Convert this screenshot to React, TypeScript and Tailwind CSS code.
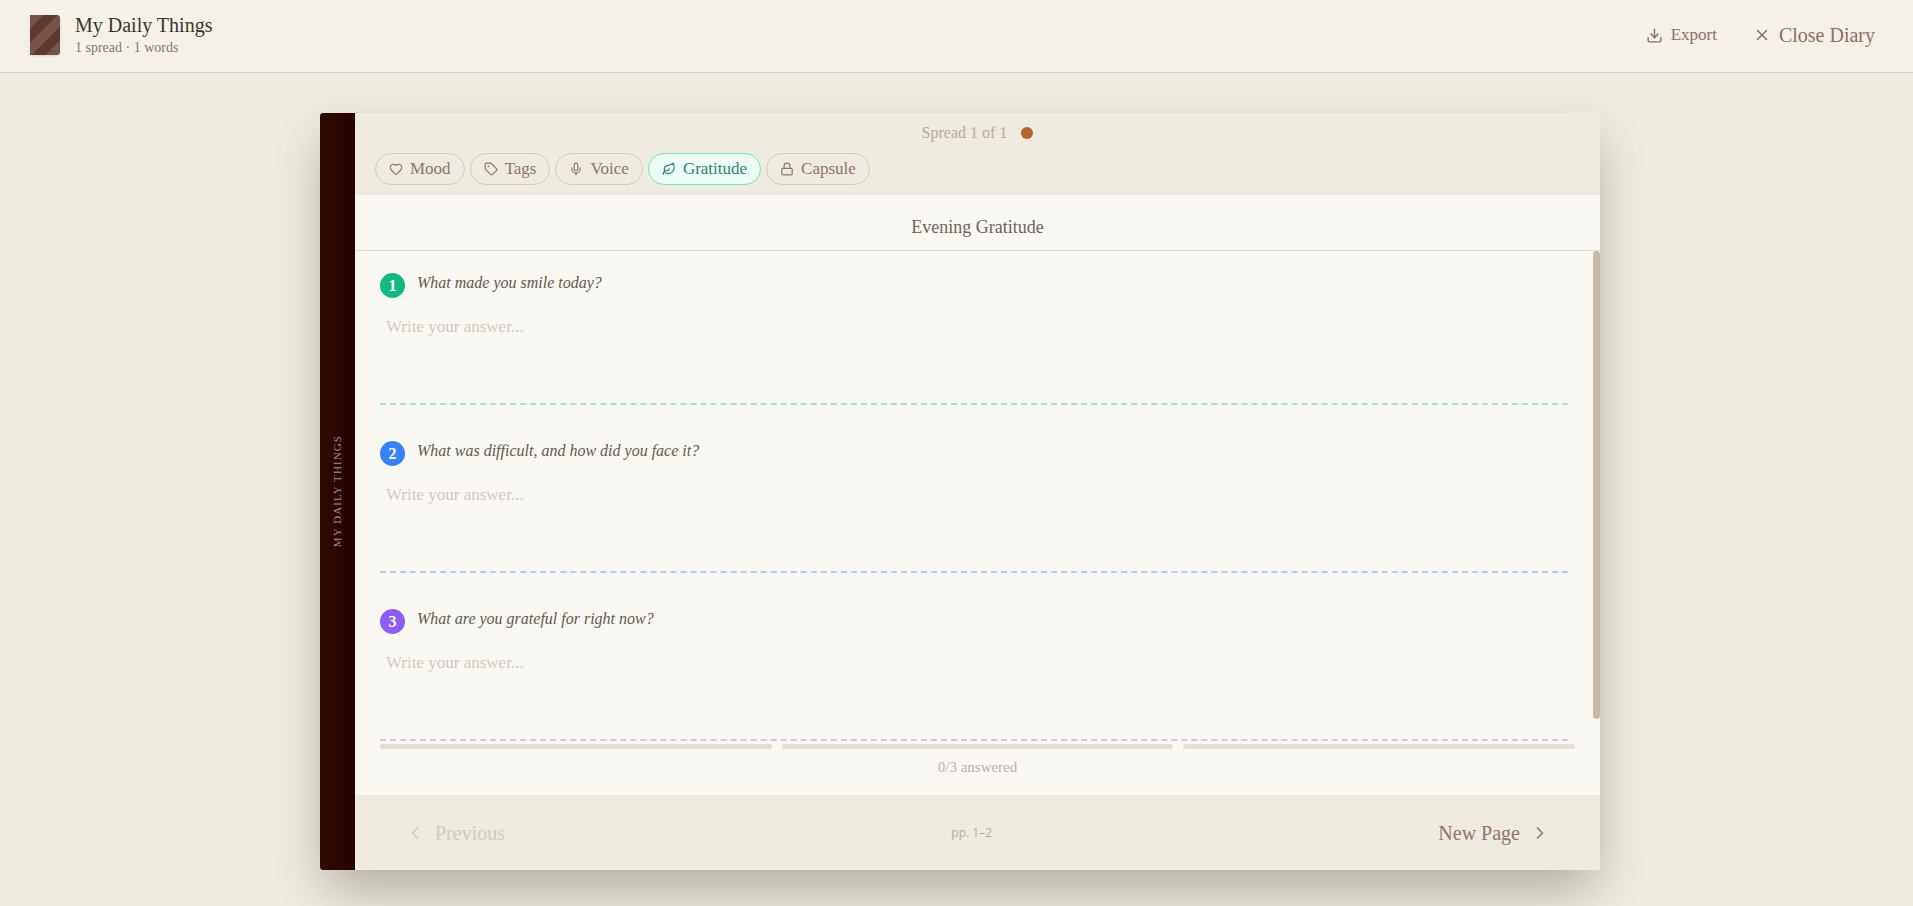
import { useState } from "react";
import { ChevronLeft, ChevronRight, Download, Heart, Leaf, Lock, Mic, Tag, X } from "lucide-react";

const tools = [
  { id: "mood", label: "Mood", icon: Heart },
  { id: "tags", label: "Tags", icon: Tag },
  { id: "voice", label: "Voice", icon: Mic },
  { id: "gratitude", label: "Gratitude", icon: Leaf },
  { id: "capsule", label: "Capsule", icon: Lock },
];

const questions = [
  { text: "What made you smile today?", badge: "bg-[#10b981]", line: "border-[#a3e5cb]" },
  { text: "What was difficult, and how did you face it?", badge: "bg-[#3b82f6]", line: "border-[#b3cff5]" },
  { text: "What are you grateful for right now?", badge: "bg-[#8b5cf6]", line: "border-[#cfc5f5]" },
];

const Header = () => (
  <header className="flex h-[73px] items-center justify-between border-b border-[#d9d0c3] bg-[#f5f1e8] pr-[38px] pb-[2px] pl-[30px]">
    <div className="flex items-center gap-[15px]">
      <div className="h-10 w-[30px] rounded-r-[3px] bg-[repeating-linear-gradient(-45deg,#755348_0_10px,#5c3a2e_10px_20px)] shadow-sm" />
      <div>
        <h1 className="text-[20px] leading-[26px] font-medium text-[#3a342c]">My Daily Things</h1>
        <p className="text-[14px] leading-[20px] text-[#8d7468]">1 spread · 1 words</p>
      </div>
    </div>
    <div className="flex items-center gap-9 text-[#8d6e63]">
      <button className="flex cursor-pointer items-center gap-2 text-[17px] leading-6">
        <Download size={17} />
        Export
      </button>
      <button className="flex cursor-pointer items-center gap-2 text-[20px] leading-6">
        <X size={18} />
        Close Diary
      </button>
    </div>
  </header>
);

const Spine = () => (
  <div className="flex w-[35px] shrink-0 items-center justify-center rounded-l-[3px] bg-linear-to-r from-[#300a02] to-[#240400]">
    <span className="rotate-180 text-[11px] tracking-widest text-[#a38d84] uppercase [writing-mode:vertical-rl]">
      My Daily Things
    </span>
  </div>
);

const App = () => {
  const [active, setActive] = useState("gratitude");
  const [answers, setAnswers] = useState(["", "", ""]);

  const answered = answers.filter((answer) => answer.trim() !== "").length;

  const updateAnswer = (index: number, value: string) => {
    setAnswers(answers.map((answer, i) => (i === index ? value : answer)));
  };

  return (
    <div className="flex min-h-screen flex-col bg-[#efeadf] font-['Liberation_Serif',serif]">
      <Header />

      <main className="flex flex-1 justify-center overflow-hidden pt-10 pr-10 pb-9 pl-[47px]">
        <div className="flex w-full max-w-[1280px] rounded-l-[3px] shadow-[0_25px_50px_-12px_rgba(0,0,0,0.2),0_20px_50px_rgba(60,50,30,0.13)]">
          <Spine />

          <div className="flex min-w-0 flex-1 flex-col bg-[#faf8f3]">
            <div className="bg-[#efeadf] px-5 pt-2 pb-[10px]">
              <div className="flex h-6 items-center justify-center gap-[14px] text-[16px] text-[#b8a99d]">
                Spread 1 of 1
                <span className="size-3 rounded-full bg-[#b0662d]" />
              </div>
              <div className="mt-2 flex gap-[5px]">
                {tools.map(({ id, label, icon: Icon }) => (
                  <button
                    key={id}
                    onClick={() => setActive(id)}
                    className={`flex h-8 cursor-pointer items-center gap-[7px] rounded-full border px-[13px] text-[17px] leading-5 ${
                      active === id
                        ? "border-[#6ee7b7] bg-[#ecfdf5] text-[#2f8468]"
                        : "border-[#d5cabc] text-[#8d766b]"
                    }`}
                  >
                    <Icon size={14} />
                    {label}
                  </button>
                ))}
              </div>
            </div>

            <h2 className="flex h-14 items-center justify-center border-b border-[#dedad2] pt-[10px] text-[18px] font-medium text-[#6b6459]">
              Evening Gratitude
            </h2>

            <div className="flex flex-1">
              <div className="flex flex-1 flex-col gap-8 px-[25px] pt-[18px] pb-[3px]">
                {questions.map((question, index) => (
                  <div key={question.text}>
                    <div className="flex h-[29px] gap-3">
                      <span
                        className={`mt-1 flex size-[25px] shrink-0 items-center justify-center rounded-full text-[16px] font-bold text-white ${question.badge}`}
                      >
                        {index + 1}
                      </span>
                      <label htmlFor={`answer-${index}`} className="text-[16px] leading-7 text-[#5f584d] italic">
                        {question.text}
                      </label>
                    </div>
                    <textarea
                      id={`answer-${index}`}
                      value={answers[index]}
                      onChange={(e) => updateAnswer(index, e.target.value)}
                      placeholder="Write your answer..."
                      className={`mt-[10px] block h-[97px] w-full resize-none border-b-2 border-dashed px-[6px] py-[5px] text-[17px] leading-7 text-[#5f584d] outline-none placeholder:text-[#d2c8bf] ${question.line}`}
                    />
                  </div>
                ))}
              </div>
              <div className="w-[7px]">
                <div className="h-[95%] rounded-full bg-[#c9b8a4]" />
              </div>
            </div>

            <div className="px-[25px] pb-[18px]">
              <div className="flex gap-[10px]">
                {questions.map((question, index) => (
                  <div
                    key={question.text}
                    className={`h-[5px] flex-1 rounded-full ${answers[index].trim() ? question.badge : "bg-[#e8ddd5]"}`}
                  />
                ))}
              </div>
              <p className="mt-2 text-center text-[15px] leading-5 text-[#bdb0a5]">{answered}/3 answered</p>
            </div>

            <footer className="flex h-[75px] items-center justify-between bg-[#efeadf] px-[50px] text-[20px]">
              <button disabled className="flex items-center gap-[10px] text-[#d3c9be]">
                <ChevronLeft size={20} />
                Previous
              </button>
              <span className="font-['Open_Sans',sans-serif] text-[12px] text-[#b8aa9e]">pp. 1–2</span>
              <button className="flex cursor-pointer items-center gap-[10px] text-[#8d766b]">
                New Page
                <ChevronRight size={20} />
              </button>
            </footer>
          </div>
        </div>
      </main>
    </div>
  );
};

export default App;
